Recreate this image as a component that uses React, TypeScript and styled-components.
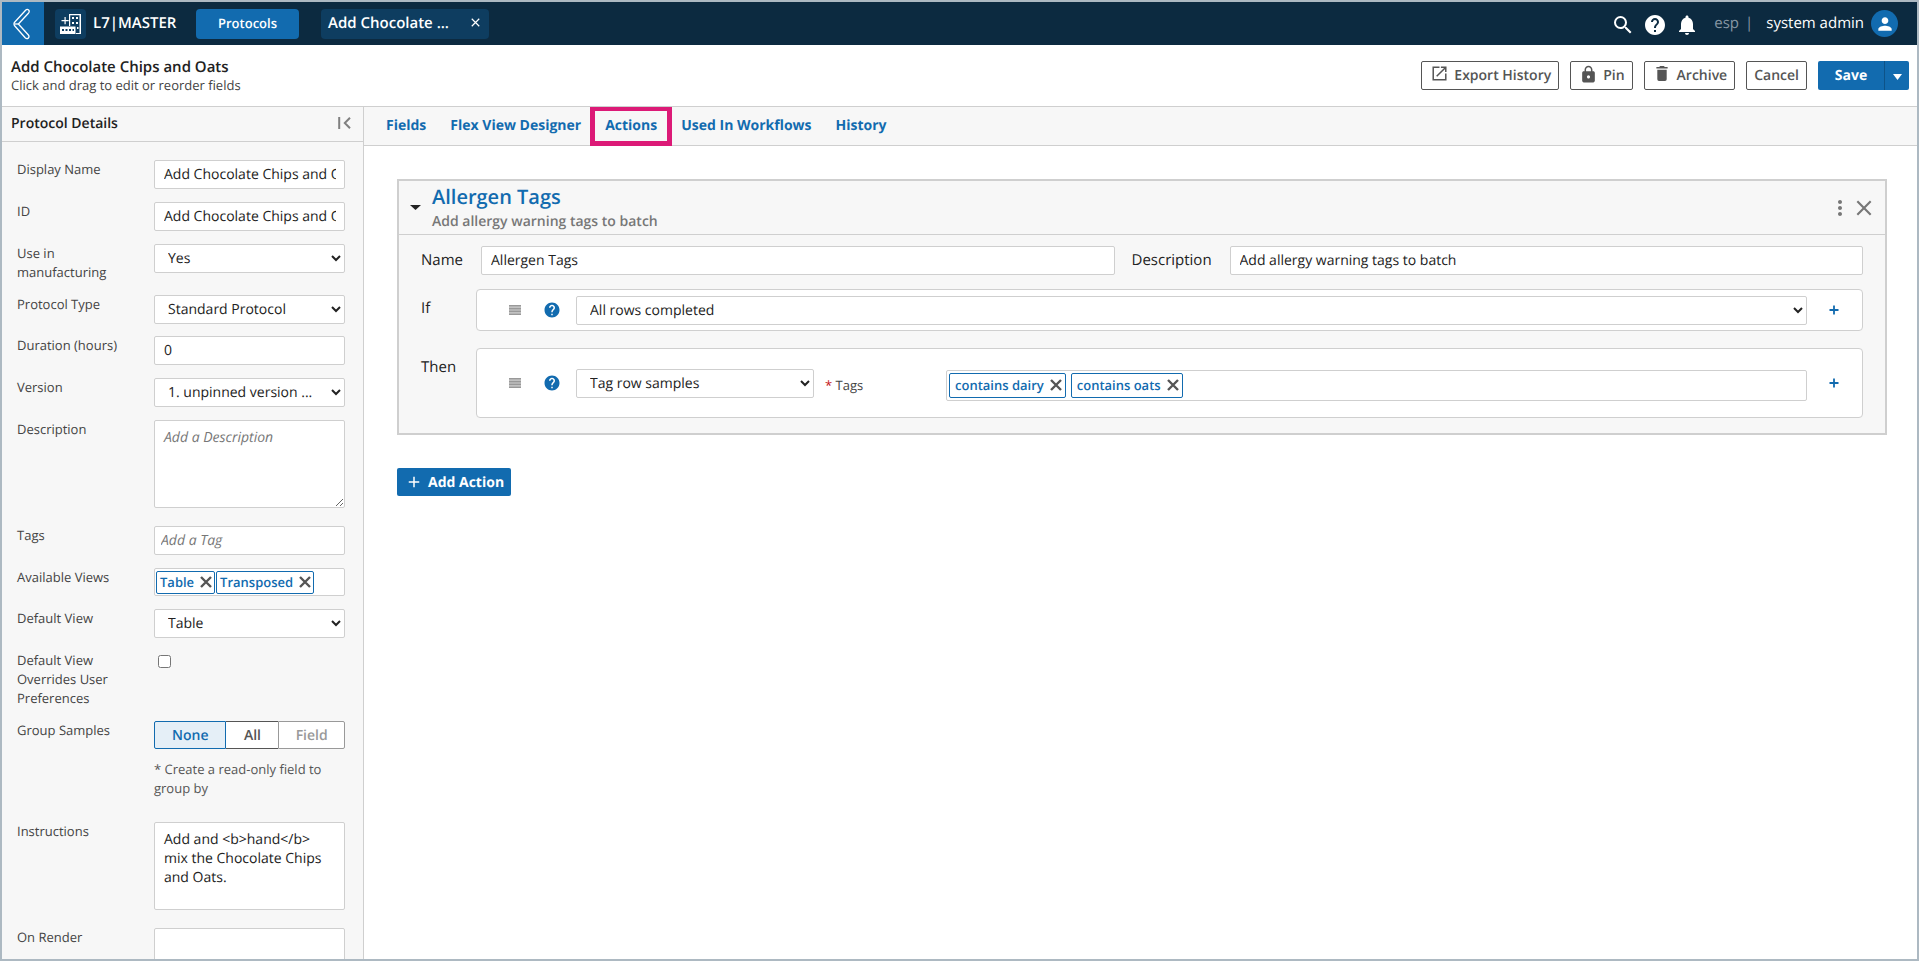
import React from "react";
import styled, { createGlobalStyle } from "styled-components";
import { MdSearch, MdHelp, MdNotifications, MdPerson, MdLock, MdMoreVert, MdAdd } from "react-icons/md";

const blue = "#126baf";
const line = "#cfcfcf";
const ink = "#222222";
const grey = "#555555";

const GlobalStyle = createGlobalStyle`
  *, *::before, *::after { box-sizing: border-box; }
  body { margin: 0; background: #fff; text-rendering: geometricPrecision; }
  body, button, input, select, textarea {
    font-family: "Open Sans", "Noto Sans", sans-serif;
    font-size: 14px;
    color: ${ink};
  }
  button, input, select, textarea { text-rendering: inherit; }
  button { cursor: pointer; padding: 0; }
`;

const Page = styled.div`
  height: 100vh;
  display: flex;
  flex-direction: column;
  border: 2px solid #adb9c2;
  background: #fff;
`;

/* ---------- top bar ---------- */
const TopBar = styled.header`
  flex: none;
  height: 43px;
  display: flex;
  align-items: center;
  background: #0c2a40;
  padding-right: 19px;
`;

const BackButton = styled.button`
  width: 42px;
  height: 43px;
  border: 0;
  background: ${blue};
  display: grid;
  place-items: center;
`;

const AppTile = styled.span`
  width: 31px;
  height: 30px;
  margin-left: 11px;
  border-radius: 4px;
  background: #0e3d60;
  display: grid;
  place-items: center;
`;

const Brand = styled.span`
  width: 110px;
  padding: 0 0 2px 7px;
  color: #fff;
  font-size: 15px;
  font-weight: 600;
  white-space: nowrap;
`;

const ModuleButton = styled.button`
  width: 103px;
  height: 30px;
  padding-bottom: 1px;
  border: 0;
  border-radius: 4px;
  background: ${blue};
  color: #fff;
  font-size: 13px;
  font-weight: 600;
`;

const OpenTab = styled.div`
  width: 168px;
  height: 30px;
  margin-left: 22px;
  padding: 0 9px 2px 7px;
  border-radius: 4px;
  background: #0e3d60;
  display: flex;
  align-items: center;
  justify-content: space-between;
  color: #fff;
  font-size: 15px;
  font-weight: 600;
`;

const BareButton = styled.button`
  border: 0;
  background: none;
  color: inherit;
  display: inline-flex;
  align-items: center;
  justify-content: center;
`;

const TopTools = styled.div`
  margin-left: auto;
  display: flex;
  align-items: center;
  color: #fff;
  font-size: 15px;
`;

const ToolIcons = styled.div`
  display: flex;
  gap: 8px;
  padding-top: 2px;
`;

const Tenant = styled.span`
  display: flex;
  gap: 6px;
  margin-left: 15px;
  padding-bottom: 2px;
  color: #8696a3;
`;

const UserName = styled.span`
  margin: 0 7px 0 13px;
  padding-bottom: 2px;
`;

const Avatar = styled.span`
  width: 27px;
  height: 27px;
  border-radius: 50%;
  background: ${blue};
  display: grid;
  place-items: center;
`;

/* ---------- title row ---------- */
const TitleRow = styled.div`
  flex: none;
  height: 62px;
  padding: 0 8px 0 9px;
  display: flex;
  justify-content: space-between;
  border-bottom: 1px solid ${line};
`;

const TitleText = styled.div`
  padding-top: 12px;
`;

const PageTitle = styled.h1`
  margin: 0;
  font-size: 15px;
  line-height: 20px;
  font-weight: 600;
`;

const PageHint = styled.p`
  margin: 0;
  font-size: 13px;
  line-height: 17px;
  color: #444;
`;

const Actions = styled.div`
  display: flex;
  gap: 11px;
  padding-top: 16px;
`;

const OutlineButton = styled.button`
  height: 29px;
  padding: 0 7px;
  border: 1px solid ${grey};
  border-radius: 2px;
  background: #fff;
  color: ${grey};
  font-weight: 600;
  display: flex;
  align-items: center;
  gap: 5px;
  white-space: nowrap;
`;

const ButtonIcon = styled.span`
  width: 20px;
  height: 22px;
  padding-bottom: 4px;
  display: grid;
  place-items: center;
`;

const SplitButton = styled.div`
  display: flex;
  height: 29px;
  border-radius: 2px;
  overflow: hidden;
`;

const SaveButton = styled.button<{ $width: number }>`
  width: ${(p) => p.$width}px;
  border: 0;
  background: ${blue};
  color: #fff;
  font-weight: 700;
  & + & { border-left: 1px solid #0d5388; }
`;

/* ---------- body ---------- */
const Body = styled.div`
  flex: 1;
  min-height: 0;
  display: flex;
`;

const Sidebar = styled.aside`
  flex: none;
  width: 362px;
  display: flex;
  flex-direction: column;
  background: #f7f7f7;
  border-right: 1px solid ${line};
`;

const SidebarHead = styled.div`
  flex: none;
  height: 35px;
  padding: 0 12px 2px 9px;
  border-bottom: 1px solid ${line};
  display: flex;
  align-items: center;
  justify-content: space-between;
  color: #808080;
`;

const SidebarTitle = styled.h2`
  margin: 0;
  font-size: 14px;
  font-weight: 600;
  color: ${ink};
`;

const DetailsForm = styled.form`
  flex: 1;
  min-height: 0;
  overflow-y: auto;
  scrollbar-width: none;
  padding: 18px 18px 0 15px;
`;

const FormRow = styled.div<{ $gap?: number }>`
  display: grid;
  grid-template-columns: 137px minmax(0, 1fr);
  align-items: start;
  margin-bottom: ${(p) => p.$gap ?? 13}px;
`;

const FieldLabel = styled.label`
  padding-right: 30px;
  font-size: 13px;
  line-height: 19px;
  color: #444;
`;

const TextInput = styled.input`
  width: 100%;
  min-width: 0;
  height: 29px;
  padding: 0 8px 0 9px;
  border: 1px solid ${line};
  border-radius: 2px;
  background: #fff;
  &::placeholder { font-style: italic; color: #777; }
`;

const TagInput = styled(TextInput)`
  padding-left: 6px;
`;

const Select = styled.select`
  width: 100%;
  height: 29px;
  padding: 0 0 0 9px;
  border: 1px solid ${line};
  border-radius: 2px;
  background: #fff;
`;

const TextArea = styled.textarea<{ $resize?: boolean }>`
  display: block;
  width: 100%;
  height: 88px;
  padding: 7px 9px;
  border: 1px solid ${line};
  border-radius: 2px;
  background: #fff;
  line-height: 19px;
  overflow: hidden;
  resize: ${(p) => (p.$resize ? "vertical" : "none")};
  &::placeholder { font-style: italic; color: #777; }
`;

const ChipBox = styled.div<{ $wide?: boolean }>`
  flex: 1;
  min-width: 0;
  height: ${(p) => (p.$wide ? 31 : 28)}px;
  margin-top: ${(p) => (p.$wide ? 4 : 0)}px;
  padding: 0 ${(p) => (p.$wide ? 2 : 1)}px;
  border: 1px solid ${line};
  border-radius: 2px;
  background: #fff;
  display: flex;
  align-items: center;
  gap: ${(p) => (p.$wide ? 5 : 1)}px;
`;

const ChipEntry = styled.input`
  flex: 1;
  min-width: 0;
  border: 0;
  padding: 0;
  outline: 0;
  background: none;
`;

const ChipBody = styled.span<{ $wide?: boolean }>`
  height: ${(p) => (p.$wide ? 25 : 23)}px;
  padding: 0 ${(p) => (p.$wide ? 3 : 2)}px 1px ${(p) => (p.$wide ? 5 : 3)}px;
  border: 1px solid ${blue};
  border-radius: 2px;
  background: #fff;
  display: inline-flex;
  align-items: center;
  gap: 6px;
  font-size: 13px;
  font-weight: 600;
  color: ${blue};
  white-space: nowrap;
`;

const ChipClose = styled(BareButton)`
  color: ${grey};
`;

const CheckBox = styled.input`
  margin: 4px;
  width: 13px;
  height: 13px;
`;

const Segments = styled.div`
  display: flex;
  height: 28px;
`;

const Segment = styled.button<{ $grow: number; $tone: string; $on?: boolean; $last?: boolean }>`
  flex: ${(p) => p.$grow} 0 0;
  border: 1px solid ${(p) => p.$tone};
  border-left-width: ${(p) => (p.$on ? 1 : 0)}px;
  border-right-width: ${(p) => (p.$on || p.$last ? 1 : 0)}px;
  border-radius: ${(p) => (p.$on ? "2px 0 0 2px" : p.$last ? "0 2px 2px 0" : "0")};
  background: ${(p) => (p.$on ? "#e5eff7" : "#fff")};
  color: ${(p) => p.$tone};
  font-weight: 600;
  &:disabled { border-left-width: 1px; cursor: default; }
`;

const GroupHint = styled.p`
  margin: 11px 0 0;
  font-size: 13px;
  line-height: 19px;
  color: ${grey};
`;

const Main = styled.main`
  flex: 1;
  min-width: 0;
  overflow-y: auto;
`;

const TabNav = styled.nav`
  height: 39px;
  padding: 0 22px 1px;
  display: flex;
  align-items: center;
  gap: 24px;
  background: #f7f7f7;
  border-bottom: 1px solid ${line};
`;

const TabLink = styled.a`
  position: relative;
  color: ${blue};
  font-weight: 700;
  text-decoration: none;
  white-space: nowrap;
`;

/* frame laid over the active tab */
const Highlight = styled.span`
  position: absolute;
  inset: -10px -15px -11px;
  border: 5px solid #dc1a77;
`;

const Content = styled.div`
  padding: 33px 30px 33px 33px;
`;

const Card = styled.section`
  border: 2px solid ${line};
  background: #f7f7f7;
`;

const CardHead = styled.div`
  height: 54px;
  padding: 0 13px 0 11px;
  display: flex;
  align-items: center;
  border-bottom: 1px solid ${line};
`;

const CardTitles = styled.div`
  flex: 1;
  padding: 2px 0 0 11px;
`;

const CardTitle = styled.h2`
  margin: 0;
  font-size: 20px;
  line-height: 27px;
  font-weight: 600;
  color: ${blue};
`;

const CardSub = styled.p`
  margin: 0;
  line-height: 24px;
  font-weight: 600;
  color: #777;
`;

const CardTools = styled.div`
  display: flex;
  align-items: center;
  gap: 4px;
  color: #777;
`;

const CardBody = styled.div`
  padding: 11px 22px 15px;
  display: flex;
  flex-direction: column;
`;

const NameRow = styled.div`
  display: flex;
  align-items: center;
  margin-bottom: 14px;
`;

const RowLabel = styled.label<{ $width: number }>`
  flex: none;
  width: ${(p) => p.$width}px;
  padding-bottom: 1px;
  font-size: 15px;
`;

const NameSlot = styled.div`
  flex: 1;
  min-width: 0;
  margin-right: 17px;
`;

const DescriptionSlot = styled.div`
  flex: 1;
  min-width: 0;
`;

const RuleRow = styled.div`
  display: flex;
  & + & { margin-top: 17px; }
`;

const RuleName = styled.span`
  flex: none;
  width: 55px;
  padding-top: 9px;
  font-size: 15px;
  line-height: 20px;
`;

const RuleBox = styled.div<{ $height: number }>`
  flex: 1;
  min-width: 0;
  height: ${(p) => p.$height}px;
  padding: 0 20px 0 32px;
  border: 1px solid ${line};
  border-radius: 4px;
  background: #fff;
  display: flex;
  align-items: center;
`;

const HelpButton = styled(BareButton)`
  margin: 0 15px 0 22px;
  color: ${blue};
`;

const RuleSelect = styled.div<{ $width?: number }>`
  flex: ${(p) => (p.$width ? `0 0 ${p.$width}px` : "1")};
  min-width: 0;
  display: flex;
`;

const TagsLabel = styled.label`
  flex: none;
  width: 132px;
  padding: 3px 0 0 11px;
  font-size: 13px;
  color: #444;
`;

const Star = styled.span`
  color: #c4161c;
`;

const PlusButton = styled(BareButton)`
  width: 17px;
  height: 17px;
  margin-left: 18px;
  color: ${blue};
`;

const AddButton = styled.button`
  height: 28px;
  margin-top: 33px;
  padding: 0 7px 0 8px;
  border: 0;
  border-radius: 2px;
  background: ${blue};
  color: #fff;
  font-weight: 700;
  display: flex;
  align-items: center;
  gap: 5px;
`;

/* ---------- drawings ---------- */
const BackIcon = () => (
  <svg width="20" height="34" viewBox="0 0 20 34" fill="none" stroke="#fff" strokeWidth="1.3" strokeLinejoin="round">
    <path d="M12.6 3.2 Q14.2 1.6 15.8 3.2 Q16.8 4.8 15.4 6.2 L5.4 17 L15.4 28 Q16.6 29.6 15.4 31 Q13.8 32.4 12.2 30.8 L1.6 18.8 Q.4 17 1.6 15.2 Z" />
    <path d="M1.2 17 H5.4" />
  </svg>
);

const AppIcon = () => (
  <svg width="21" height="22" viewBox="0 0 21 22" fill="#fff">
    <path d="M4.500 4h1.200v3h3v1.200h-3v3h-1.200v-3h-3v-1.200h3z" />
    <path d="M9 1h12v20h-5v-1h3.500v-17.800h-9.300v10.800h-1.200z" />
    <path fillRule="evenodd" d="M0 13.500h15.500v7.500h-15.500zM2 16v2h2v-2zM5.500 16v2h2v-2zM9 16v2h2v-2zM12.500 16v2h1.500v-2z" />
    <path d="M12 4h2v2h-2zM16 4h2v2h-2zM12 9h2v2h-2zM16 9h2v2h-2zM17 14h1.500v2h-1.500z" />
  </svg>
);

const ExportIcon = () => (
  <svg width="15" height="15" viewBox="0 0 16 16" fill="none" stroke="currentColor" strokeWidth="1.6">
    <path d="M8 1.300H1.300v13.400h13.400V8" />
    <path d="M5 11 14.500 1.500M9.500 1.300h5.200V6.500" />
  </svg>
);

const TrashIcon = () => (
  <svg width="12" height="15" viewBox="0 0 12 16" fill="currentColor">
    <path d="M4 0h4l1 1h3v1.600H0V1h3zM1 4h10v10.200A1.800 1.800 0 0 1 9.200 16H2.800A1.800 1.800 0 0 1 1 14.200z" />
  </svg>
);

const Caret = ({ w, h }: { w: number; h: number }) => (
  <svg width={w} height={h} viewBox="0 0 10 5" preserveAspectRatio="none" fill="currentColor">
    <path d="M0 0h10L5 5z" />
  </svg>
);

const CollapseIcon = () => (
  <svg width="13" height="12" viewBox="0 0 13 12" fill="none" stroke="currentColor" strokeWidth="2">
    <path d="M1.200 0v12M12 .800 6.800 6 12 11.200" />
  </svg>
);

const CrossIcon = ({ size, stroke }: { size: number; stroke: number }) => (
  <svg width={size} height={size} viewBox="0 0 12 12" fill="none" stroke="currentColor" strokeWidth={stroke}>
    <path d="M1 1l10 10M11 1L1 11" />
  </svg>
);

const GripIcon = () => (
  <svg width="12" height="10" viewBox="0 0 12 10">
    <path fill="#d0d0d0" d="M0 0h12v10H0z" />
    <path fill="#999" d="M0 0h12v1.600H0zM0 2.800h12v1.600H0zM0 5.600h12v1.600H0zM0 8.400h12v1.600H0z" />
  </svg>
);

const PlusIcon = () => (
  <svg width="10" height="10" viewBox="0 0 10 10" fill="none" stroke="currentColor" strokeWidth="1.800">
    <path d="M5 .500v9M.500 5h9" />
  </svg>
);

function Chip({ text, wide }: { text: string; wide?: boolean }) {
  return (
    <ChipBody $wide={wide}>
      {text}
      <ChipClose type="button" aria-label={`Remove ${text}`}>
        <CrossIcon size={12} stroke={2.4} />
      </ChipClose>
    </ChipBody>
  );
}

function RuleStart() {
  return (
    <>
      <GripIcon />
      <HelpButton type="button" aria-label="Help">
        <MdHelp size={18} />
      </HelpButton>
    </>
  );
}

const tabs = ["Fields", "Flex View Designer", "Actions", "Used In Workflows", "History"];

export default function App() {
  return (
    <Page>
      <GlobalStyle />
      <TopBar>
        <BackButton aria-label="Back"><BackIcon /></BackButton>
        <AppTile><AppIcon /></AppTile>
        <Brand>L7|MASTER</Brand>
        <ModuleButton>Protocols</ModuleButton>
        <OpenTab>
          Add Chocolate ...
          <BareButton aria-label="Close tab"><CrossIcon size={9} stroke={1.6} /></BareButton>
        </OpenTab>
        <TopTools>
          <ToolIcons>
            <BareButton aria-label="Search"><MdSearch size={24} /></BareButton>
            <BareButton aria-label="Help"><MdHelp size={24} /></BareButton>
            <BareButton aria-label="Notifications"><MdNotifications size={24} /></BareButton>
          </ToolIcons>
          <Tenant><span>esp</span><span>|</span></Tenant>
          <UserName>system admin</UserName>
          <Avatar><MdPerson size={20} /></Avatar>
        </TopTools>
      </TopBar>

      <TitleRow>
        <TitleText>
          <PageTitle>Add Chocolate Chips and Oats</PageTitle>
          <PageHint>Click and drag to edit or reorder fields</PageHint>
        </TitleText>
        <Actions>
          <OutlineButton><ButtonIcon><ExportIcon /></ButtonIcon>Export History</OutlineButton>
          <OutlineButton><ButtonIcon><MdLock size={19} /></ButtonIcon>Pin</OutlineButton>
          <OutlineButton><ButtonIcon><TrashIcon /></ButtonIcon>Archive</OutlineButton>
          <OutlineButton>Cancel</OutlineButton>
          <SplitButton>
            <SaveButton $width={66}>Save</SaveButton>
            <SaveButton $width={25} aria-label="More save options"><Caret w={9} h={6} /></SaveButton>
          </SplitButton>
        </Actions>
      </TitleRow>

      <Body>
        <Sidebar>
          <SidebarHead>
            <SidebarTitle>Protocol Details</SidebarTitle>
            <BareButton aria-label="Collapse panel"><CollapseIcon /></BareButton>
          </SidebarHead>
          <DetailsForm>
            <FormRow>
              <FieldLabel htmlFor="display-name">Display Name</FieldLabel>
              <TextInput id="display-name" defaultValue="Add Chocolate Chips and Oats" />
            </FormRow>
            <FormRow>
              <FieldLabel htmlFor="protocol-id">ID</FieldLabel>
              <TextInput id="protocol-id" defaultValue="Add Chocolate Chips and Oats" />
            </FormRow>
            <FormRow>
              <FieldLabel htmlFor="manufacturing">Use in manufacturing</FieldLabel>
              <Select id="manufacturing"><option>Yes</option></Select>
            </FormRow>
            <FormRow $gap={12}>
              <FieldLabel htmlFor="protocol-type">Protocol Type</FieldLabel>
              <Select id="protocol-type"><option>Standard Protocol</option></Select>
            </FormRow>
            <FormRow>
              <FieldLabel htmlFor="duration">Duration (hours)</FieldLabel>
              <TextInput id="duration" defaultValue="0" />
            </FormRow>
            <FormRow>
              <FieldLabel htmlFor="version">Version</FieldLabel>
              <Select id="version"><option>1. unpinned version ...</option></Select>
            </FormRow>
            <FormRow $gap={18}>
              <FieldLabel htmlFor="description">Description</FieldLabel>
              <TextArea id="description" $resize placeholder="Add a Description" />
            </FormRow>
            <FormRow>
              <FieldLabel htmlFor="tags">Tags</FieldLabel>
              <TagInput id="tags" placeholder="Add a Tag" />
            </FormRow>
            <FormRow>
              <FieldLabel htmlFor="views">Available Views</FieldLabel>
              <ChipBox>
                <Chip text="Table" />
                <Chip text="Transposed" />
                <ChipEntry id="views" />
              </ChipBox>
            </FormRow>
            <FormRow>
              <FieldLabel htmlFor="default-view">Default View</FieldLabel>
              <Select id="default-view"><option>Table</option></Select>
            </FormRow>
            <FormRow>
              <FieldLabel htmlFor="overrides">Default View Overrides User Preferences</FieldLabel>
              <CheckBox id="overrides" type="checkbox" />
            </FormRow>
            <FormRow $gap={24}>
              <FieldLabel as="span" id="group-label">Group Samples</FieldLabel>
              <div>
                <Segments role="group" aria-labelledby="group-label">
                  <Segment type="button" $grow={72} $tone={blue} $on aria-pressed>None</Segment>
                  <Segment type="button" $grow={53} $tone={grey}>All</Segment>
                  <Segment type="button" $grow={66} $tone="#999" $last disabled>Field</Segment>
                </Segments>
                <GroupHint>* Create a read-only field to group by</GroupHint>
              </div>
            </FormRow>
            <FormRow $gap={18}>
              <FieldLabel htmlFor="instructions">Instructions</FieldLabel>
              <TextArea id="instructions" defaultValue="Add and <b>hand</b> mix the Chocolate Chips and Oats." />
            </FormRow>
            <FormRow $gap={18}>
              <FieldLabel htmlFor="on-render">On Render</FieldLabel>
              <TextArea id="on-render" />
            </FormRow>
          </DetailsForm>
        </Sidebar>

        <Main>
          <TabNav>
            {tabs.map((tab) => (
              <TabLink key={tab} href="#">
                {tab}
                {tab === "Actions" && <Highlight />}
              </TabLink>
            ))}
          </TabNav>
          <Content>
            <Card>
              <CardHead>
                <BareButton aria-label="Collapse action"><Caret w={11} h={5} /></BareButton>
                <CardTitles>
                  <CardTitle>Allergen Tags</CardTitle>
                  <CardSub>Add allergy warning tags to batch</CardSub>
                </CardTitles>
                <CardTools>
                  <BareButton aria-label="More"><MdMoreVert size={24} /></BareButton>
                  <BareButton aria-label="Remove action"><CrossIcon size={16} stroke={1.6} /></BareButton>
                </CardTools>
              </CardHead>
              <CardBody>
                <NameRow>
                  <RowLabel htmlFor="action-name" $width={60}>Name</RowLabel>
                  <NameSlot><TextInput id="action-name" defaultValue="Allergen Tags" /></NameSlot>
                  <RowLabel htmlFor="action-description" $width={98}>Description</RowLabel>
                  <DescriptionSlot>
                    <TextInput id="action-description" defaultValue="Add allergy warning tags to batch" />
                  </DescriptionSlot>
                </NameRow>
                <RuleRow>
                  <RuleName>If</RuleName>
                  <RuleBox $height={42}>
                    <RuleStart />
                    <RuleSelect>
                      <Select aria-label="Condition"><option>All rows completed</option></Select>
                    </RuleSelect>
                    <PlusButton aria-label="Add condition"><PlusIcon /></PlusButton>
                  </RuleBox>
                </RuleRow>
                <RuleRow>
                  <RuleName>Then</RuleName>
                  <RuleBox $height={70}>
                    <RuleStart />
                    <RuleSelect $width={238}>
                      <Select aria-label="Effect"><option>Tag row samples</option></Select>
                    </RuleSelect>
                    <TagsLabel htmlFor="action-tags"><Star>*</Star> Tags</TagsLabel>
                    <ChipBox $wide>
                      <Chip wide text="contains dairy" />
                      <Chip wide text="contains oats" />
                      <ChipEntry id="action-tags" />
                    </ChipBox>
                    <PlusButton aria-label="Add effect"><PlusIcon /></PlusButton>
                  </RuleBox>
                </RuleRow>
              </CardBody>
            </Card>
            <AddButton><MdAdd size={18} />Add Action</AddButton>
          </Content>
        </Main>
      </Body>
    </Page>
  );
}
